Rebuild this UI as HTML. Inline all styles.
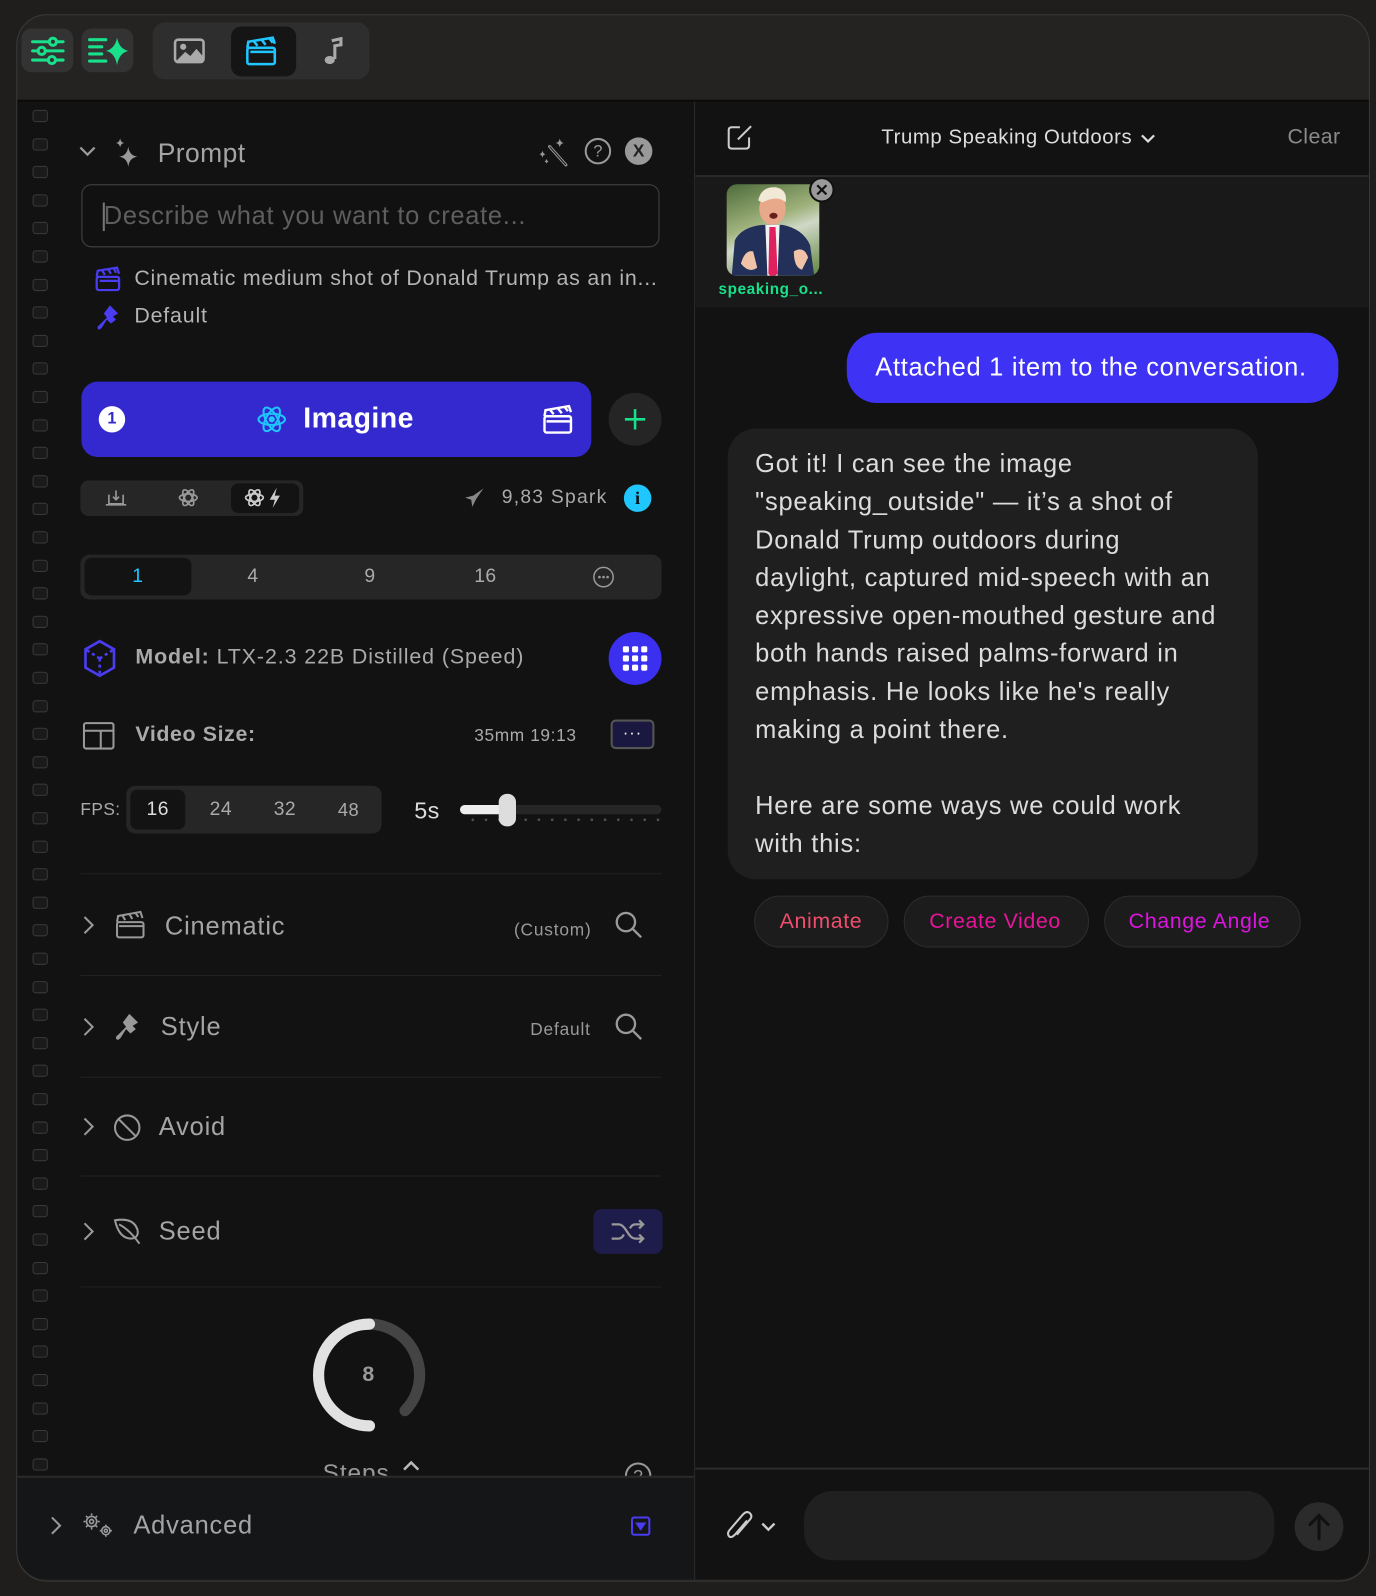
<!DOCTYPE html>
<html><head><meta charset="utf-8"><style>
*{box-sizing:border-box;margin:0;padding:0}
html,body{width:1376px;height:1596px;overflow:hidden;background:#1f1e1d;font-family:"Liberation Sans",sans-serif}
#s{position:absolute;left:0;top:0;width:1352px;height:1568px;transform:scale(1.01775);transform-origin:0 0}
.a{position:absolute}
.t{position:absolute;white-space:nowrap;letter-spacing:0.4px}
.sq{position:absolute;left:32px;width:15px;height:12px;border:1px solid #3a3a3a;border-radius:3px;background:#1a1a1a}
.hr{position:absolute;left:79px;width:571px;height:1px;background:#222}
</style></head><body><div id="s">
<div class="a" style="left:16px;top:14px;width:1330px;height:1540px;border:1px solid #3b3a38;border-radius:30px;background:#242321;overflow:hidden"></div>
<div class="a" style="left:17px;top:98px;width:1328px;height:2px;background:#0a0a0a"></div>
<div class="a" style="left:17px;top:100px;width:665px;height:1452px;background:#121212;border-bottom-left-radius:29px;overflow:hidden">
 <div class="a" style="left:0;top:1350px;width:665px;height:102px;background:#151618;border-top:2px solid #2a2a2a"></div>
</div>
<div class="a" style="left:682px;top:100px;width:1px;height:1452px;background:#2a2a2a"></div>
<div class="a" style="left:683px;top:100px;width:662px;height:1452px;background:#121212;border-bottom-right-radius:29px;overflow:hidden">
 <div class="a" style="left:0;top:72px;width:662px;height:2px;background:#2a2a2a"></div>
 <div class="a" style="left:0;top:74px;width:662px;height:128px;background:#191919"></div>
 <div class="a" style="left:0;top:1342px;width:662px;height:2px;background:#2c2c2c"></div>
</div>

<div class="a" style="left:21px;top:28px;width:51px;height:43px;border-radius:10px;background:#333"></div>
<svg class="a" style="left:30px;top:36px" width="34" height="28" viewBox="0 0 34 28" fill="none" stroke="#19e08a" stroke-width="3" stroke-linecap="round"><path d="M2 5H32M2 14H32M2 23H32"/><circle cx="22" cy="5" r="3.5" fill="#333"/><circle cx="11" cy="14" r="3.5" fill="#333"/><circle cx="21" cy="23" r="3.5" fill="#333"/></svg>
<div class="a" style="left:80px;top:28px;width:51px;height:43px;border-radius:10px;background:#333"></div>
<svg class="a" style="left:86px;top:34px" width="42" height="32" viewBox="0 0 42 32"><g stroke="#19e08a" stroke-width="3" stroke-linecap="round"><path d="M2 5H18M2 12H14M2 19H14M2 26H18"/></g><path d="M29 3 Q31 14 40 16 Q31 18 29 30 Q27 18 18 16 Q27 14 29 3Z" fill="#19e08a"/></svg>
<div class="a" style="left:150px;top:22px;width:213px;height:56px;border-radius:12px;background:#2e2e2e"></div>
<svg class="a" style="left:170px;top:36px" width="32" height="28" viewBox="0 0 32 28"><rect x="2" y="3" width="28" height="22" rx="3" fill="none" stroke="#aaa" stroke-width="2.5"/><circle cx="10" cy="10" r="3" fill="#aaa"/><path d="M3 24 L12 15 L17 19 L23 12 L30 20 V24Z" fill="#aaa"/></svg>
<div class="a" style="left:227px;top:26px;width:64px;height:49px;border-radius:10px;background:#151515"></div>
<svg class="a" style="left:240px;top:34px" width="34" height="32" viewBox="0 0 34 32" fill="none" stroke="#1fc6ff" stroke-width="2.5"><rect x="3" y="13" width="27" height="16" rx="2"/><path d="M3 13 L4 7 L28 3 L30 9"/><path d="M9 6 L13 11 M17 5 L21 10 M25 4 L28 8 M6 17 H29"/></svg>
<svg class="a" style="left:315px;top:36px" width="24" height="30" viewBox="0 0 24 30"><path d="M11 4 L20 2 V8 L14 9 V22" stroke="#aaa" stroke-width="3" fill="none"/><ellipse cx="9" cy="23" rx="5" ry="4" fill="#aaa"/></svg>

<div id="g"></div>

<svg class="a" style="left:77px;top:142px" width="18" height="14" viewBox="0 0 18 14"><path d="M2 3 L9 10 L16 3" stroke="#9a9a9a" stroke-width="2.2" fill="none"/></svg>
<svg class="a" style="left:110px;top:134px" width="28" height="32" viewBox="0 0 28 32" fill="#9a9a9a"><path d="M16 10 Q17 19 25 20 Q17 21 16 30 Q15 21 7 20 Q15 19 16 10Z"/><path d="M8 2 Q8.6 6 12 6.5 Q8.6 7 8 11 Q7.4 7 4 6.5 Q7.4 6 8 2Z"/></svg>
<div class="t" style="left:155px;top:135px;font-size:26px;color:#a4a4a4">Prompt</div>
<svg class="a" style="left:528px;top:134px" width="32" height="32" viewBox="0 0 32 32"><path d="M12 10 L28 28" stroke="#999" stroke-width="3" stroke-linecap="round"/><path d="M12 10 L28 28" stroke="#121212" stroke-width="1"/><path d="M22 2 Q22.5 6 26 6.5 Q22.5 7 22 11 Q21.5 7 18 6.5 Q21.5 6 22 2Z M5 14 Q5.5 17 8 17.5 Q5.5 18 5 21 Q4.5 18 2 17.5 Q4.5 17 5 14Z M9 22 Q9.4 24 11 24.5 Q9.4 25 9 27 Q8.6 25 7 24.5 Q8.6 24 9 22Z" fill="#999"/></svg>
<svg class="a" style="left:574px;top:135px" width="27" height="27" viewBox="0 0 27 27"><circle cx="13.5" cy="13.5" r="12" fill="none" stroke="#999" stroke-width="2"/><text x="13.5" y="19" font-size="16" text-anchor="middle" fill="#999" font-family="Liberation Sans">?</text></svg>
<div class="a" style="left:614px;top:135px;width:27px;height:27px;border-radius:50%;background:#999;color:#222;font-size:17px;text-align:center;line-height:27px;font-weight:bold">X</div>

<div class="a" style="left:80px;top:181px;width:568px;height:62px;border:1.5px solid #444;border-radius:10px;background:#111"></div>
<div class="a" style="left:101px;top:199px;width:2px;height:28px;background:#777"></div>
<div class="t" style="left:102px;top:198px;font-size:25px;color:#5e5e5e;letter-spacing:0.7px">Describe what you want to create...</div>
<svg class="a" style="left:93px;top:261px" width="26" height="26" viewBox="0 0 26 26" fill="none" stroke="#4a3cf0" stroke-width="2.2"><rect x="2" y="11" width="22" height="13" rx="2"/><path d="M2 11 L3 5 L22 2 L24 8 M7 4 L10 9 M13 3 L16 8 M19 3 L21 7 M5 15 H23"/></svg>
<div class="t" style="left:132px;top:262px;font-size:21px;color:#b4b4b4;letter-spacing:0.75px">Cinematic medium shot of Donald Trump as an in...</div>
<svg class="a" style="left:94px;top:298px" width="26" height="28" viewBox="0 0 26 28"><path d="M14 2 L22 10 L17 13 L20 16 L15 20 L11 16 L6 24 Q3 27 2 25 Q1 23 4 21 L11 14 L8 10Z" fill="#4a3cf0"/></svg>
<div class="t" style="left:132px;top:299px;font-size:21px;color:#b4b4b4;letter-spacing:0.8px">Default</div>

<div class="a" style="left:80px;top:375px;width:501px;height:74px;border-radius:16px;background:#3329cf"></div>
<div class="a" style="left:97px;top:399px;width:26px;height:26px;border-radius:50%;background:#fff;color:#3329cf;font-size:16px;font-weight:bold;text-align:center;line-height:26px">1</div>
<svg class="a" style="left:252px;top:397px" width="30" height="30" viewBox="0 0 30 30" fill="none" stroke="#1fc6ff" stroke-width="2"><ellipse cx="15" cy="15" rx="13" ry="5.5"/><ellipse cx="15" cy="15" rx="13" ry="5.5" transform="rotate(60 15 15)"/><ellipse cx="15" cy="15" rx="13" ry="5.5" transform="rotate(-60 15 15)"/><circle cx="15" cy="15" r="2" fill="#1fc6ff"/></svg>
<div class="t" style="left:298px;top:395px;font-size:28px;color:#fff;font-weight:bold">Imagine</div>
<svg class="a" style="left:532px;top:396px" width="32" height="32" viewBox="0 0 32 32" fill="none" stroke="#fff" stroke-width="2.4"><rect x="3" y="13" width="26" height="16" rx="2"/><path d="M3 13 L4 7 L27 3 L29 9 M8 6 L12 11 M16 5 L20 10 M23 4 L26 8 M5 18 H28"/></svg>
<div class="a" style="left:598px;top:386px;width:52px;height:52px;border-radius:50%;background:#252525"></div>
<svg class="a" style="left:612px;top:400px" width="24" height="24" viewBox="0 0 24 24"><path d="M12 2V22M2 12H22" stroke="#19e08a" stroke-width="2.5"/></svg>

<div class="a" style="left:79px;top:472px;width:219px;height:35px;border-radius:8px;background:#262626"></div>
<div class="a" style="left:227px;top:475px;width:67px;height:29px;border-radius:7px;background:#131313"></div>
<svg class="a" style="left:103px;top:480px" width="22" height="18" viewBox="0 0 22 18" fill="none" stroke="#999" stroke-width="1.6"><path d="M4 6 V15 H18 V6 M1 16 H21 M11 2 V11 M8 8 L11 11 L14 8"/></svg>
<svg class="a" style="left:175px;top:479px" width="20" height="20" viewBox="0 0 30 30" fill="none" stroke="#999" stroke-width="2.5"><ellipse cx="15" cy="15" rx="13" ry="5.5"/><ellipse cx="15" cy="15" rx="13" ry="5.5" transform="rotate(60 15 15)"/><ellipse cx="15" cy="15" rx="13" ry="5.5" transform="rotate(-60 15 15)"/></svg>
<svg class="a" style="left:240px;top:479px" width="20" height="20" viewBox="0 0 30 30" fill="none" stroke="#ccc" stroke-width="2.5"><ellipse cx="15" cy="15" rx="13" ry="5.5"/><ellipse cx="15" cy="15" rx="13" ry="5.5" transform="rotate(60 15 15)"/><ellipse cx="15" cy="15" rx="13" ry="5.5" transform="rotate(-60 15 15)"/></svg>
<svg class="a" style="left:263px;top:478px" width="14" height="22" viewBox="0 0 14 22"><path d="M9 1 L2 13 H7 L5 21 L12 9 H7Z" fill="#ccc"/></svg>
<svg class="a" style="left:455px;top:478px" width="22" height="22" viewBox="0 0 22 22"><path d="M20 2 L13 12 L9 20 L8 13 L2 11 L10 9Z" fill="#888"/></svg>
<div class="t" style="left:493px;top:478px;font-size:19px;color:#aaa;letter-spacing:1.2px">9,83 Spark</div>
<div class="a" style="left:613px;top:476px;width:27px;height:27px;border-radius:50%;background:#1fc6ff;color:#111;font-size:18px;font-weight:bold;text-align:center;line-height:27px;font-family:'Liberation Serif',serif">i</div>

<div class="a" style="left:79px;top:545px;width:571px;height:44px;border-radius:9px;background:#262626"></div>
<div class="a" style="left:83px;top:548px;width:105px;height:37px;border-radius:7px;background:#131313"></div>
<div class="t" style="left:130px;top:556px;font-size:19px;color:#1fc6ff">1</div>
<div class="t" style="left:243px;top:556px;font-size:19px;color:#aaa">4</div>
<div class="t" style="left:358px;top:556px;font-size:19px;color:#aaa">9</div>
<div class="t" style="left:466px;top:556px;font-size:19px;color:#aaa">16</div>
<svg class="a" style="left:582px;top:556px" width="22" height="22" viewBox="0 0 22 22"><circle cx="11" cy="11" r="9.5" fill="none" stroke="#999" stroke-width="1.5"/><circle cx="7" cy="11" r="1.3" fill="#999"/><circle cx="11" cy="11" r="1.3" fill="#999"/><circle cx="15" cy="11" r="1.3" fill="#999"/></svg>

<svg class="a" style="left:81px;top:628px" width="34" height="38" viewBox="0 0 34 38" fill="none" stroke="#4a3cf0" stroke-width="2.6"><path d="M17 2 L31 10 V28 L17 36 L3 28 V10Z"/><path d="M17 19 L3 10 M17 19 L31 10 M17 19 V36" stroke-dasharray="3 3"/></svg>
<div class="t" style="left:133px;top:634px;font-size:21px;color:#aaa;letter-spacing:0.9px"><b>Model:</b> LTX-2.3 22B Distilled (Speed)</div>
<div class="a" style="left:598px;top:621px;width:52px;height:52px;border-radius:50%;background:#3b30f0"></div>
<svg class="a" style="left:611px;top:634px" width="26" height="26" viewBox="0 0 26 26" fill="#fff"><rect x="1" y="1" width="6" height="6" rx="1.5"/><rect x="10" y="1" width="6" height="6" rx="1.5"/><rect x="19" y="1" width="6" height="6" rx="1.5"/><rect x="1" y="10" width="6" height="6" rx="1.5"/><rect x="10" y="10" width="6" height="6" rx="1.5"/><rect x="19" y="10" width="6" height="6" rx="1.5"/><rect x="1" y="19" width="6" height="6" rx="1.5"/><rect x="10" y="19" width="6" height="6" rx="1.5"/><rect x="19" y="19" width="6" height="6" rx="1.5"/></svg>

<svg class="a" style="left:81px;top:709px" width="32" height="28" viewBox="0 0 32 28" fill="none" stroke="#999" stroke-width="2"><rect x="1.5" y="1.5" width="29" height="25" rx="2"/><path d="M1.5 9 H30.5 M18 9 V26.5"/></svg>
<div class="t" style="left:133px;top:710px;font-size:21px;color:#aaa;font-weight:bold;letter-spacing:0.6px">Video Size:</div>
<div class="t" style="left:466px;top:713px;font-size:17px;color:#aaa;letter-spacing:0.6px">35mm 19:13</div>
<div class="a" style="left:600px;top:707px;width:43px;height:29px;border:2px solid #555;border-radius:5px;background:#1a1840;color:#fff;text-align:center;line-height:24px;font-size:16px;letter-spacing:1px">···</div>

<div class="t" style="left:79px;top:786px;font-size:17px;color:#aaa">FPS:</div>
<div class="a" style="left:124px;top:772px;width:251px;height:47px;border-radius:9px;background:#262626"></div>
<div class="a" style="left:128px;top:776px;width:54px;height:39px;border-radius:7px;background:#131313"></div>
<div class="t" style="left:144px;top:785px;font-size:19px;color:#ddd">16</div>
<div class="t" style="left:206px;top:785px;font-size:19px;color:#aaa">24</div>
<div class="t" style="left:269px;top:785px;font-size:19px;color:#aaa">32</div>
<div class="t" style="left:332px;top:786px;font-size:18px;color:#aaa">48</div>
<div class="t" style="left:407px;top:783px;font-size:23px;color:#ddd">5s</div>
<div class="a" style="left:452px;top:791px;width:198px;height:9px;border-radius:5px;background:#262626"></div>
<div class="a" style="left:452px;top:791px;width:46px;height:9px;border-radius:5px;background:#eee"></div>
<div class="a" style="left:458px;top:804px;width:190px;height:3px;background:radial-gradient(circle,#555 1px,transparent 1.5px) 0 0/13px 3px"></div>
<div class="a" style="left:490px;top:780px;width:17px;height:32px;border-radius:8px;background:#ddd"></div>

<div class="hr" style="top:858px"></div>
<svg class="a" style="left:81px;top:899px" width="12" height="20" viewBox="0 0 12 20"><path d="M2 2 L10 10 L2 18" stroke="#999" stroke-width="2" fill="none"/></svg>
<svg class="a" style="left:113px;top:894px" width="30" height="30" viewBox="0 0 30 30" fill="none" stroke="#999" stroke-width="2"><rect x="2" y="12" width="26" height="15" rx="2"/><path d="M2 12 L3 6 L25 2 L27 8 M7 5 L10 10 M14 4 L17 9 M20 3 L23 7 M4 16 H27"/></svg>
<div class="t" style="left:162px;top:896px;font-size:25px;color:#a4a4a4;letter-spacing:0.8px">Cinematic</div>
<div class="t" style="left:505px;top:904px;font-size:17px;color:#999;letter-spacing:0.8px">(Custom)</div>
<svg class="a" style="left:604px;top:895px" width="28" height="28" viewBox="0 0 28 28" fill="none" stroke="#999" stroke-width="2.3"><circle cx="11" cy="11" r="9"/><path d="M18 18 L26 26"/></svg>
<div class="hr" style="top:958px"></div>
<svg class="a" style="left:81px;top:999px" width="12" height="20" viewBox="0 0 12 20"><path d="M2 2 L10 10 L2 18" stroke="#999" stroke-width="2" fill="none"/></svg>
<svg class="a" style="left:112px;top:994px" width="28" height="30" viewBox="0 0 26 28"><path d="M14 2 L22 10 L17 13 L20 16 L15 20 L11 16 L6 24 Q3 27 2 25 Q1 23 4 21 L11 14 L8 10Z" fill="#999"/></svg>
<div class="t" style="left:158px;top:995px;font-size:25px;color:#a4a4a4;letter-spacing:0.8px">Style</div>
<div class="t" style="left:521px;top:1002px;font-size:17px;color:#999;letter-spacing:0.8px">Default</div>
<svg class="a" style="left:604px;top:995px" width="28" height="28" viewBox="0 0 28 28" fill="none" stroke="#999" stroke-width="2.3"><circle cx="11" cy="11" r="9"/><path d="M18 18 L26 26"/></svg>
<div class="hr" style="top:1058px"></div>
<svg class="a" style="left:81px;top:1097px" width="12" height="20" viewBox="0 0 12 20"><path d="M2 2 L10 10 L2 18" stroke="#999" stroke-width="2" fill="none"/></svg>
<svg class="a" style="left:111px;top:1094px" width="28" height="28" viewBox="0 0 28 28" fill="none" stroke="#999" stroke-width="2"><circle cx="14" cy="14" r="12"/><path d="M6 6 L22 22"/></svg>
<div class="t" style="left:156px;top:1093px;font-size:25px;color:#a4a4a4;letter-spacing:0.8px">Avoid</div>
<div class="hr" style="top:1155px"></div>
<svg class="a" style="left:81px;top:1200px" width="12" height="20" viewBox="0 0 12 20"><path d="M2 2 L10 10 L2 18" stroke="#999" stroke-width="2" fill="none"/></svg>
<svg class="a" style="left:111px;top:1196px" width="30" height="28" viewBox="0 0 30 28" fill="none" stroke="#999" stroke-width="2"><path d="M2 3 Q20 0 24 12 Q26 20 18 21 Q6 21 2 3Z M6 7 Q16 12 26 26"/></svg>
<div class="t" style="left:156px;top:1196px;font-size:25px;color:#a4a4a4;letter-spacing:0.8px">Seed</div>
<div class="a" style="left:583px;top:1188px;width:68px;height:44px;border-radius:8px;background:#1e1c4a"></div>
<svg class="a" style="left:600px;top:1197px" width="34" height="26" viewBox="0 0 34 26" fill="none" stroke="#999" stroke-width="2.2"><path d="M1 6 H8 Q12 6 16 13 Q20 20 24 20 H32 M1 20 H8 Q11 20 13 16 M19 10 Q21 6 24 6 H32 M28 2 L32 6 L28 10 M28 16 L32 20 L28 24"/></svg>
<div class="hr" style="top:1264px"></div>

<svg class="a" style="left:305px;top:1293px" width="116" height="116" viewBox="0 0 116 116" fill="none" stroke-width="11" stroke-linecap="round"><path d="M58 8 A50 50 0 0 1 93 93" stroke="#444"/><path d="M58 108 A50 50 0 0 1 58 8" stroke="#e2e2e2"/></svg>
<div class="t" style="left:356px;top:1339px;font-size:21px;color:#999;font-weight:bold">8</div>
<div class="a" style="left:17px;top:1430px;width:665px;height:20px;overflow:hidden">
 <div class="t" style="left:300px;top:4px;font-size:24px;color:#999;letter-spacing:0.9px">Steps</div>
 <svg class="a" style="left:378px;top:4px" width="18" height="12" viewBox="0 0 18 12"><path d="M2 10 L9 3 L16 10" stroke="#bbb" stroke-width="2.5" fill="none"/></svg>
 <svg class="a" style="left:596px;top:6px" width="28" height="28" viewBox="0 0 28 28"><circle cx="14" cy="14" r="12" fill="none" stroke="#999" stroke-width="2"/><text x="14" y="20" font-size="17" text-anchor="middle" fill="#999" font-family="Liberation Sans">?</text></svg>
</div>

<svg class="a" style="left:49px;top:1489px" width="12" height="20" viewBox="0 0 12 20"><path d="M2 2 L10 10 L2 18" stroke="#999" stroke-width="2" fill="none"/></svg>
<svg class="a" style="left:80px;top:1485px" width="34" height="28" viewBox="0 0 34 28" fill="none" stroke="#999" stroke-width="1.6"><circle cx="10" cy="10" r="5"/><circle cx="10" cy="10" r="2"/><path d="M10 2V4M10 16V18M2 10H4M16 10H18M4.5 4.5L6 6M14 14L15.5 15.5M4.5 15.5L6 14M14 6L15.5 4.5"/><circle cx="24" cy="19" r="4"/><circle cx="24" cy="19" r="1.5"/><path d="M24 13V14.5M24 23.5V25M18 19H19.5M28.5 19H30"/></svg>
<div class="t" style="left:131px;top:1485px;font-size:25px;color:#a4a4a4;letter-spacing:0.8px">Advanced</div>
<div class="a" style="left:620px;top:1490px;width:19px;height:19px;border:2px solid #4a3cf0;border-radius:3px"></div>
<svg class="a" style="left:624px;top:1496px" width="11" height="8" viewBox="0 0 11 8"><path d="M0 0H11L5.5 8Z" fill="#4a3cf0"/></svg>

<svg class="a" style="left:714px;top:122px" width="26" height="26" viewBox="0 0 26 26" fill="none" stroke="#ccc" stroke-width="2"><path d="M13 3 H5 Q2 3 2 6 V21 Q2 24 5 24 H19 Q22 24 22 21 V13"/><path d="M11 15 L24 2"/></svg>
<div class="t" style="left:866px;top:124px;font-size:20px;color:#ddd;letter-spacing:0.55px">Trump Speaking Outdoors</div>
<svg class="a" style="left:1120px;top:130px" width="16" height="12" viewBox="0 0 16 12"><path d="M2 3 L8 9 L14 3" stroke="#ddd" stroke-width="2.2" fill="none"/></svg>
<div class="t" style="left:1265px;top:123px;font-size:21px;color:#8a8a8a">Clear</div>

<div class="a" style="left:714px;top:181px;width:91px;height:90px;border-radius:10px;overflow:hidden;background:linear-gradient(160deg,#4d6b3a,#9fb27c 40%,#cfd8c6 55%,#5f8440)">
 <svg width="91" height="90" viewBox="0 0 91 90"><path d="M5 90 L8 55 Q15 42 35 40 L55 40 Q75 44 82 60 L86 90Z" fill="#22305a"/><path d="M38 40 L52 40 L50 90 L40 90Z" fill="#f2f2f2"/><path d="M42 42 L48 42 L50 88 L45 92 L41 88Z" fill="#e0215e"/><ellipse cx="45" cy="24" rx="13" ry="16" fill="#e8a98a"/><path d="M31 16 Q34 2 48 3 Q60 5 58 18 Q50 10 35 18Z" fill="#f1e9d6"/><ellipse cx="46" cy="31" rx="4" ry="3" fill="#6a1e1e"/><path d="M14 78 Q18 64 26 66 L30 82 Q22 88 14 78Z M66 66 Q76 60 80 72 L74 84 Q66 82 66 66Z" fill="#f0c2a8"/></svg>
</div>
<div class="a" style="left:795px;top:174px;width:25px;height:25px;border-radius:50%;background:#9a9a9a;border:2px solid #111"></div>
<svg class="a" style="left:801px;top:180px" width="13" height="13" viewBox="0 0 13 13"><path d="M2 2 L11 11 M11 2 L2 11" stroke="#111" stroke-width="2.2"/></svg>
<div class="t" style="left:706px;top:276px;font-size:15px;color:#19e08a;font-weight:bold;letter-spacing:0.6px">speaking_o...</div>

<div class="a" style="left:832px;top:327px;width:483px;height:69px;border-radius:30px;background:#3e33f5"></div>
<div class="t" style="left:860px;top:347px;font-size:25px;color:#fff;letter-spacing:0.7px">Attached 1 item to the conversation.</div>

<div class="a" style="left:715px;top:421px;width:521px;height:443px;border-radius:28px;background:#1f1f1f"></div>
<div class="a" style="left:742px;top:438px;width:490px;font-size:25px;line-height:37.3px;color:#dcdcdc;letter-spacing:0.75px;white-space:nowrap">Got it! I can see the image<br>"speaking_outside" — it’s a shot of<br>Donald Trump outdoors during<br>daylight, captured mid-speech with an<br>expressive open-mouthed gesture and<br>both hands raised palms-forward in<br>emphasis. He looks like he's really<br>making a point there.<br><br>Here are some ways we could work<br>with this:</div>

<div class="a" style="left:741px;top:880px;width:132px;height:51px;border-radius:25px;background:#1c1c1c;border:1px solid #2d2d2d"></div>
<div class="t" style="left:766px;top:894px;font-size:21px;color:#f24d6e;letter-spacing:0.6px">Animate</div>
<div class="a" style="left:888px;top:880px;width:182px;height:51px;border-radius:25px;background:#1c1c1c;border:1px solid #2d2d2d"></div>
<div class="t" style="left:913px;top:894px;font-size:21px;color:#e8149a;letter-spacing:0.6px">Create Video</div>
<div class="a" style="left:1085px;top:880px;width:193px;height:51px;border-radius:25px;background:#1c1c1c;border:1px solid #2d2d2d"></div>
<div class="t" style="left:1109px;top:894px;font-size:21px;color:#dc14e0;letter-spacing:0.6px">Change Angle</div>

<svg class="a" style="left:712px;top:1484px" width="30" height="32" viewBox="0 0 30 32" fill="none" stroke="#ccc" stroke-width="2"><path d="M22 10 L10 24 Q6 28 4 25 Q2 22 6 18 L18 4 Q22 0 25 3 Q28 6 24 10 L12 24"/></svg>
<svg class="a" style="left:747px;top:1494px" width="16" height="12" viewBox="0 0 16 12"><path d="M2 3 L8 9 L14 3" stroke="#ccc" stroke-width="2.4" fill="none"/></svg>
<div class="a" style="left:790px;top:1465px;width:462px;height:68px;border-radius:28px;background:#202020"></div>
<div class="a" style="left:1272px;top:1476px;width:48px;height:48px;border-radius:50%;background:#2b2b2b"></div>
<svg class="a" style="left:1284px;top:1486px" width="24" height="28" viewBox="0 0 24 28" fill="none" stroke="#111" stroke-width="3" stroke-linecap="round"><path d="M12 26 V3 M3 12 L12 3 L21 12"/></svg>

<script>
var h='';for(var y=108;y<1440;y+=27.6){h+='<div class="sq" style="top:'+Math.round(y)+'px"></div>';}
document.getElementById('g').innerHTML=h;
</script>
</div></body></html>
